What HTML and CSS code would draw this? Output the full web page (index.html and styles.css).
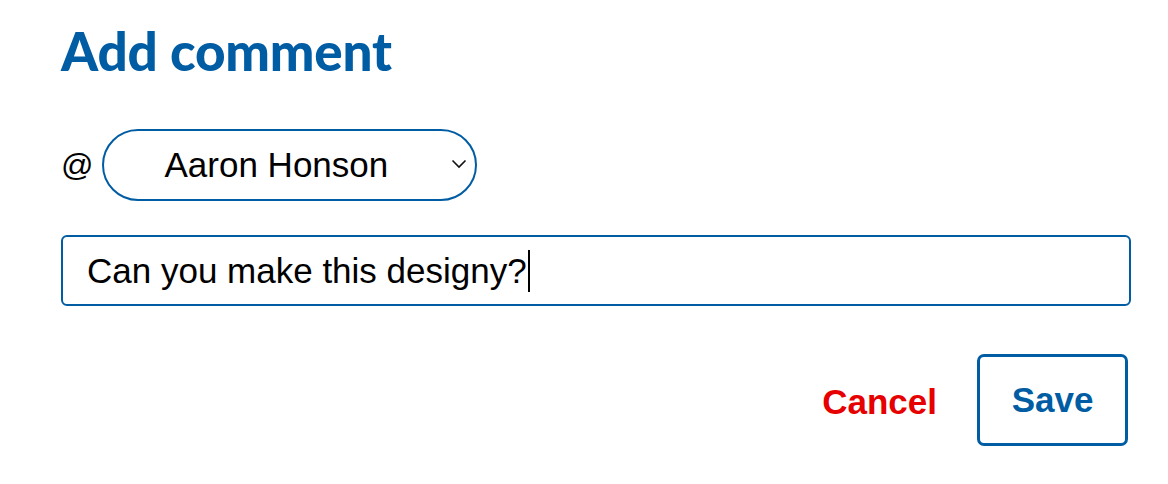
FILE: index.html
```html
<!DOCTYPE html>
<html>
<head>
<meta charset="utf-8">
<link rel="stylesheet" href="styles.css">
</head>
<body>
<div class="panel">
  <h1 class="title">Add comment</h1>
  <div class="mention-row">
    <span class="at">@</span>
    <div class="select-wrap">
      <div class="select">Aaron Honson</div>
      <svg class="chevron" width="16" height="10" viewBox="0 0 16 10"><path d="M1.5 1.5 L8 8 L14.5 1.5" fill="none" stroke="#111" stroke-width="1.6"/></svg>
    </div>
  </div>
  <div class="textbox">Can you make this designy?<span class="caret"></span></div>
  <div class="actions">
    <button class="cancel">Cancel</button>
    <button class="save">Save</button>
  </div>
</div>
</body>
</html>
```
FILE: styles.css
```css
html, body {
  margin: 0;
  padding: 0;
  background: #ffffff;
}
.panel {
  padding: 21px 37px 0 61px;
  font-family: "Liberation Sans", Arial, sans-serif;
  color: #000;
}
.title {
  margin: 0;
  font-family: Lato, "Liberation Sans", sans-serif;
  font-weight: 900;
  font-size: 53px;
  line-height: 60px;
  letter-spacing: -0.2px;
  color: #005ca3;
}
.mention-row {
  display: flex;
  align-items: center;
  gap: 9px;
  margin-top: 48px;
}
.at {
  font-size: 32px;
  line-height: 40px;
}
.select-wrap {
  position: relative;
}
.select {
  box-sizing: border-box;
  width: 375px;
  height: 72px;
  border: 2px solid #005ca3;
  border-radius: 36px;
  padding-left: 60px;
  display: flex;
  align-items: center;
  font-size: 35px;
}
.chevron {
  position: absolute;
  right: 10px;
  top: 30px;
}
.textbox {
  box-sizing: border-box;
  margin-top: 34px;
  height: 71px;
  border: 2px solid #005ca3;
  border-radius: 6px;
  padding-left: 24px;
  display: flex;
  align-items: center;
  font-size: 35px;
}
.caret {
  display: inline-block;
  width: 2px;
  height: 42px;
  background: #000;
  margin-left: 1px;
}
.actions {
  display: flex;
  justify-content: flex-end;
  align-items: center;
  gap: 40px;
  margin-top: 48px;
  margin-right: 3px;
}
.actions button {
  font-family: "Liberation Sans", Arial, sans-serif;
  font-weight: 700;
  font-size: 35px;
  background: #fff;
  cursor: pointer;
}
.cancel {
  border: none;
  padding: 0;
  padding-top: 4px;
  color: #e60000;
}
.save {
  box-sizing: border-box;
  width: 151px;
  height: 92px;
  border: 3px solid #005ca3;
  border-radius: 7px;
  color: #005ca3;
  padding: 0;
}
```
